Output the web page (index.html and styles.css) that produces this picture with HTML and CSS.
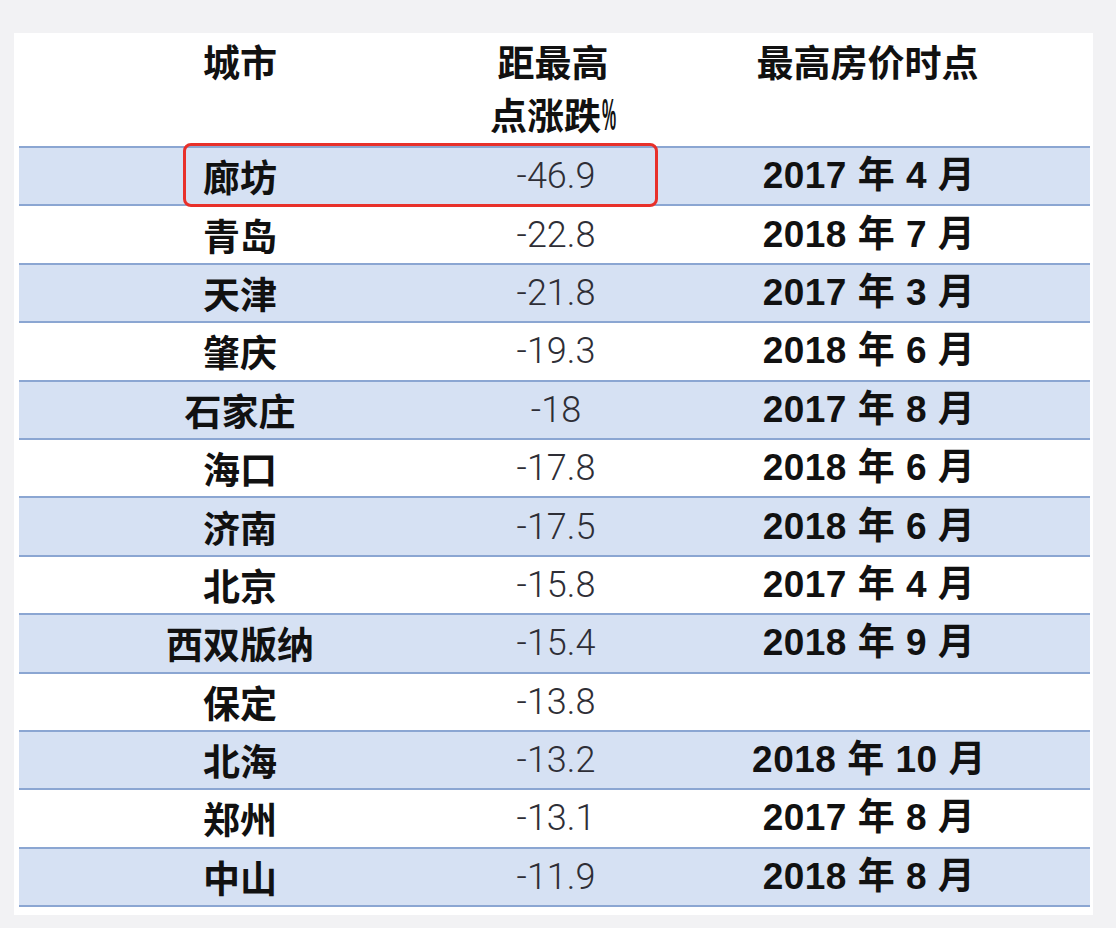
FILE: index.html
```html
<!DOCTYPE html>
<html lang="zh-CN">
<head>
<meta charset="utf-8">
<title>城市房价距最高点涨跌</title>
<link rel="stylesheet" href="styles.css">
</head>
<body>
<div class="card">
  <div class="table">
    <div class="head">
      <div class="c1">城市</div>
      <div class="c2">距最高<br>点涨跌<span class="pct">%</span></div>
      <div class="c3">最高房价时点</div>
    </div>
    <div class="rows">
      <div class="row odd"><div class="c1">廊坊</div><div class="c2 num">-46.9</div><div class="c3 date">2017 年 4 月</div></div>
      <div class="row"><div class="c1">青岛</div><div class="c2 num">-22.8</div><div class="c3 date">2018 年 7 月</div></div>
      <div class="row odd"><div class="c1">天津</div><div class="c2 num">-21.8</div><div class="c3 date">2017 年 3 月</div></div>
      <div class="row"><div class="c1">肇庆</div><div class="c2 num">-19.3</div><div class="c3 date">2018 年 6 月</div></div>
      <div class="row odd"><div class="c1">石家庄</div><div class="c2 num">-18</div><div class="c3 date">2017 年 8 月</div></div>
      <div class="row"><div class="c1">海口</div><div class="c2 num">-17.8</div><div class="c3 date">2018 年 6 月</div></div>
      <div class="row odd"><div class="c1">济南</div><div class="c2 num">-17.5</div><div class="c3 date">2018 年 6 月</div></div>
      <div class="row"><div class="c1">北京</div><div class="c2 num">-15.8</div><div class="c3 date">2017 年 4 月</div></div>
      <div class="row odd"><div class="c1">西双版纳</div><div class="c2 num">-15.4</div><div class="c3 date">2018 年 9 月</div></div>
      <div class="row"><div class="c1">保定</div><div class="c2 num">-13.8</div><div class="c3 date"></div></div>
      <div class="row odd"><div class="c1">北海</div><div class="c2 num">-13.2</div><div class="c3 date">2018 年 10 月</div></div>
      <div class="row"><div class="c1">郑州</div><div class="c2 num">-13.1</div><div class="c3 date">2017 年 8 月</div></div>
      <div class="row odd"><div class="c1">中山</div><div class="c2 num">-11.9</div><div class="c3 date">2018 年 8 月</div></div>
    </div>
  </div>
  <div class="highlight"></div>
</div>
</body>
</html>
```
FILE: styles.css
```css
html, body {
  margin: 0;
  padding: 0;
}
body {
  background: #f2f2f4;
  padding: 33px 23px 13px 14px;
  font-family: "Liberation Sans", "Noto Sans CJK SC", sans-serif;
  color: #111;
}
.card {
  position: relative;
  background: #ffffff;
  padding: 0 3px 8px 5px;
}
.table {
  display: flex;
  flex-direction: column;
}
.head {
  display: flex;
  height: 113px;
  font-family: "Noto Sans CJK SC", sans-serif;
  font-weight: 700;
  font-size: 37px;
  line-height: 53px;
  box-sizing: border-box;
  padding-top: 2px;
}
.c1 {
  width: 442px;
  text-align: center;
  flex: none;
}
.c2 {
  width: 184px;
  text-align: center;
  flex: none;
}
.c3 {
  flex: 1;
  text-align: center;
}
.pct {
  display: inline-block;
  font-family: "Liberation Sans", sans-serif;
  font-size: 44px;
  line-height: 40px;
  transform: scaleX(0.36);
  transform-origin: left center;
  margin-right: -25px;
  margin-left: 1px;
}
.rows {
  border-top: 2px solid #8ba6d2;
}
.row {
  display: flex;
  align-items: center;
  height: 58.4px;
  box-sizing: border-box;
  border-bottom: 2px solid #8ba6d2;
  background: #ffffff;
}
.row.odd {
  background: #d6e1f3;
}
.row .c1 {
  font-family: "Noto Sans CJK SC", sans-serif;
  font-weight: 700;
  font-size: 37px;
  line-height: 40px;
}
.num {
  font-family: "Roboto", "Liberation Sans", sans-serif;
  font-weight: 300;
  font-size: 36px;
  line-height: 40px;
  color: #2e2e36;
  padding-left: 3px;
}
.date {
  font-family: "Liberation Sans", "Noto Sans CJK SC", sans-serif;
  font-weight: 700;
  font-size: 37px;
  letter-spacing: 0.5px;
  word-spacing: 0px;
  line-height: 40px;
}
.highlight {
  position: absolute;
  left: 169px;
  top: 110px;
  width: 475px;
  height: 64px;
  box-sizing: border-box;
  border: 3px solid #e8302a;
  border-radius: 8px;
}
```
